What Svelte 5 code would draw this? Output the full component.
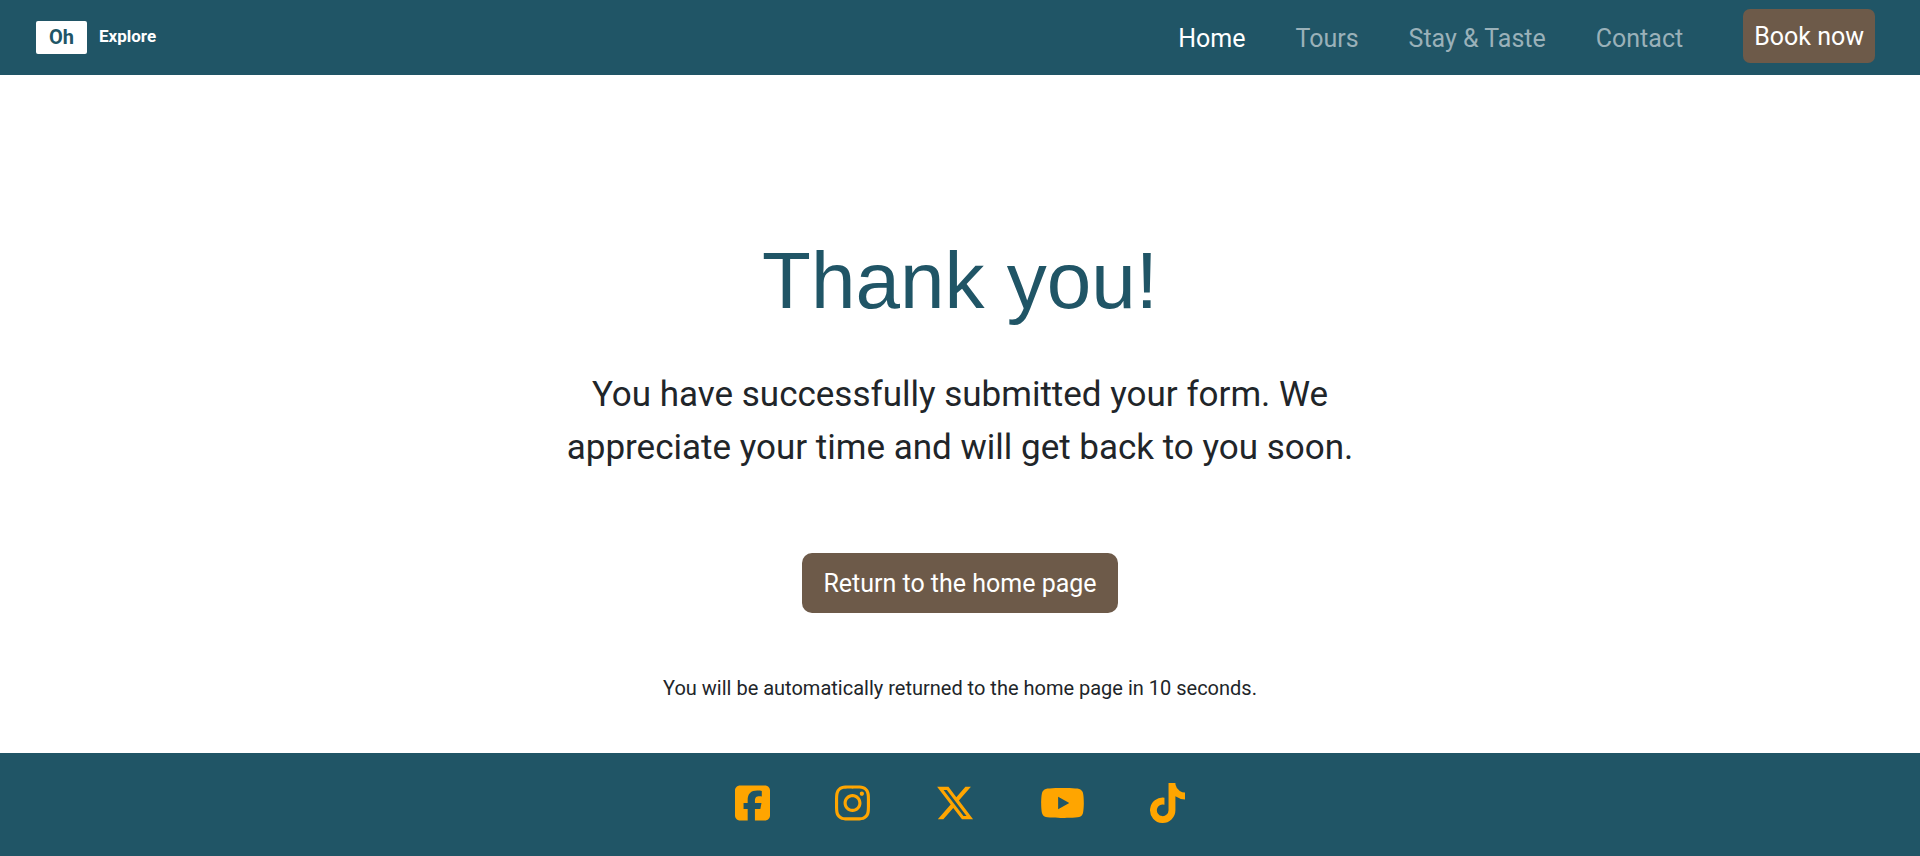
<script>
  const links = [
    { label: 'Home', active: true },
    { label: 'Tours', active: false },
    { label: 'Stay & Taste', active: false },
    { label: 'Contact', active: false }
  ];

  const socials = [
    {
      name: 'Facebook',
      width: 448,
      path: 'M64 32C28.7 32 0 60.7 0 96V416c0 35.3 28.7 64 64 64h98.2V334.2H109.4V256h52.8V222.3c0-87.1 39.4-127.5 125-127.5c16.2 0 44.2 3.2 55.7 6.4V172c-6-.6-16.5-1-29.6-1c-42 0-58.2 15.9-58.2 57.2V256h83.6l-14.4 78.2H255V480H384c35.3 0 64-28.7 64-64V96c0-35.3-28.7-64-64-64H64z'
    },
    {
      name: 'Instagram',
      width: 448,
      path: 'M224.1 141c-63.6 0-114.9 51.3-114.9 114.9s51.3 114.9 114.9 114.9S339 319.5 339 255.9 287.7 141 224.1 141zm0 189.6c-41.1 0-74.7-33.5-74.7-74.7s33.5-74.7 74.7-74.7 74.7 33.5 74.7 74.7-33.6 74.7-74.7 74.7zm146.4-194.3c0 14.9-12 26.8-26.8 26.8-14.9 0-26.8-12-26.8-26.8s12-26.8 26.8-26.8 26.8 12 26.8 26.8zm76.1 27.2c-1.7-35.9-9.9-67.7-36.2-93.9-26.2-26.2-58-34.4-93.9-36.2-37-2.1-147.9-2.1-184.9 0-35.8 1.7-67.6 9.9-93.9 36.1s-34.4 58-36.2 93.9c-2.1 37-2.1 147.9 0 184.9 1.7 35.9 9.9 67.7 36.2 93.9s58 34.4 93.9 36.2c37 2.1 147.9 2.1 184.9 0 35.9-1.7 67.7-9.9 93.9-36.2 26.2-26.2 34.4-58 36.2-93.9 2.1-37 2.1-147.8 0-184.8zM398.8 388c-7.8 19.6-22.9 34.7-42.6 42.6-29.5 11.7-99.5 9-132.1 9s-102.7 2.6-132.1-9c-19.6-7.8-34.7-22.9-42.6-42.6-11.7-29.5-9-99.5-9-132.1s-2.6-102.7 9-132.1c7.8-19.6 22.9-34.7 42.6-42.6 29.5-11.7 99.5-9 132.1-9s102.7-2.6 132.1 9c19.6 7.8 34.7 22.9 42.6 42.6 11.7 29.5 9 99.5 9 132.1s2.7 102.7-9 132.1z'
    },
    {
      name: 'X',
      width: 512,
      path: 'M389.2 48h70.6L305.6 224.2 487 464H345L233.7 318.6 106.5 464H35.8L200.7 275.5 26.8 48H172.4L272.9 180.9 389.2 48zM364.4 421.8h39.1L151.1 88h-42L364.4 421.8z'
    },
    {
      name: 'YouTube',
      width: 576,
      path: 'M549.655 124.083c-6.281-23.65-24.787-42.276-48.284-48.597C458.781 64 288 64 288 64S117.22 64 74.629 75.486c-23.497 6.322-42.003 24.947-48.284 48.597-11.412 42.867-11.412 132.305-11.412 132.305s0 89.438 11.412 132.305c6.281 23.65 24.787 41.5 48.284 47.821C117.22 448 288 448 288 448s170.78 0 213.371-11.486c23.497-6.321 42.003-24.171 48.284-47.821 11.412-42.867 11.412-132.305 11.412-132.305s0-89.438-11.412-132.305zm-317.51 213.508V175.185l142.739 81.205-142.739 81.201z'
    },
    {
      name: 'TikTok',
      width: 448,
      path: 'M448,209.91a210.06,210.06,0,0,1-122.77-39.25V349.38A162.55,162.55,0,1,1,185,188.31V278.2a74.62,74.62,0,1,0,52.23,71.18V0l88,0a121.18,121.18,0,0,0,1.86,22.17h0A122.18,122.18,0,0,0,381,102.39a121.43,121.43,0,0,0,67,20.14Z'
    }
  ];
</script>

<div class="page">
  <header>
    <a class="brand" href="#home">
      <span class="mark">Oh</span>
      <span class="name">Explore</span>
    </a>
    <nav>
      {#each links as link}
        <a class="link" class:active={link.active} href="#{link.label}">{link.label}</a>
      {/each}
    </nav>
    <button class="book" type="button">Book now</button>
  </header>

  <main>
    <h1>Thank you!</h1>
    <p class="lead">You have successfully submitted your form. We appreciate your time and will get back to you soon.</p>
    <a class="return" href="#home">Return to the home page</a>
    <p class="note">You will be automatically returned to the home page in 10 seconds.</p>
  </main>

  <footer>
    {#each socials as social}
      <a href="#{social.name}" aria-label={social.name}>
        <svg viewBox="0 0 {social.width} 512" aria-hidden="true"><path d={social.path} /></svg>
      </a>
    {/each}
  </footer>
</div>

<style>
  :global(body) {
    margin: 0;
  }

  .page {
    display: flex;
    flex-direction: column;
    min-height: 100vh;
    background: #fff;
    color: #212529;
    font-family: Roboto, sans-serif;
  }

  a {
    color: inherit;
    text-decoration: none;
  }

  header {
    display: flex;
    align-items: flex-start;
    padding: 9px 45px 12px 36px;
    background: #205566;
    color: #fff;
  }

  .brand {
    display: flex;
    align-items: flex-start;
    gap: 12px;
    margin: 12px auto 0 0;
    font-weight: 700;
  }

  .mark {
    padding: 0 13px;
    border-radius: 2px;
    background: #fff;
    color: #205566;
    font-size: 20px;
    line-height: 33px;
  }

  .name {
    font-size: 17px;
    line-height: 30px;
  }

  nav {
    display: flex;
    gap: 50px;
    margin-right: 60px;
    padding-top: 11px;
  }

  .link {
    color: #9ab1b9;
    font-size: 25px;
    line-height: 38px;
  }

  .link.active {
    color: #fff;
  }

  .book {
    padding: 9px 11px 7px;
    border: 0;
    border-radius: 7px;
    background: #6d5a49;
    color: #fff;
    font: 25px/38px Roboto, sans-serif;
  }

  main {
    display: flex;
    flex: 1;
    flex-direction: column;
    align-items: center;
    padding: 158px 24px 48px;
    text-align: center;
  }

  h1 {
    margin: 0 0 39px;
    color: #205566;
    font: 400 80px/96px "Liberation Sans", sans-serif;
  }

  .lead {
    max-width: 800px;
    margin: 0 0 79px;
    font-size: 35px;
    line-height: 53px;
  }

  .return {
    margin-bottom: 60px;
    padding: 12px 21px 10px;
    border-radius: 10px;
    background: #6d5a49;
    color: #fff;
    font-size: 25px;
    line-height: 38px;
  }

  .note {
    margin: 0;
    font-size: 20px;
    line-height: 30px;
  }

  footer {
    display: flex;
    justify-content: center;
    gap: 65px;
    padding: 30px 24px 33px;
    background: #205566;
    color: #ffa500;
  }

  footer svg {
    display: block;
    height: 40px;
    fill: currentColor;
  }
</style>
